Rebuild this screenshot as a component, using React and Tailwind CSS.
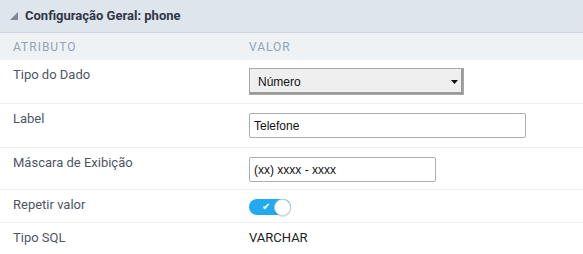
import React from 'react';

const rows = [
  { label: 'Tipo do Dado', h: 'h-[44px]', kind: 'select' },
  { label: 'Label', h: 'h-[44px]', kind: 'label' },
  { label: 'Máscara de Exibição', h: 'h-[42px]', kind: 'mask' },
  { label: 'Repetir valor', h: 'h-[33px]', kind: 'toggle' },
  { label: 'Tipo SQL', h: 'h-[31px]', kind: 'text' },
];

const Value = ({ kind }) => {
  if (kind === 'select') {
    return (
      <div className="mt-[8px] flex h-[27px] w-[215px] items-center justify-between border border-[#a8a8a8] bg-[#efefef] pl-[8px] pr-[4px] shadow-[inset_-2px_-2px_0_#9a9a9a] font-['Liberation_Sans',sans-serif] text-[12px] text-[#111]">
        <span>Número</span>
        <svg width="7" height="4" viewBox="0 0 7 4" className="mr-[1px]">
          <path d="M0 0h7L3.5 4z" fill="#111" />
        </svg>
      </div>
    );
  }
  if (kind === 'label' || kind === 'mask') {
    return (
      <div
        className={`${kind === 'label' ? 'mt-[9px] w-[277px]' : 'mt-[9px] w-[187px]'} flex h-[25px] items-center rounded-[2px] border border-[#a9aeb8] bg-white px-[4px] font-['Liberation_Sans',sans-serif] text-[12px] text-[#111]`}
      >
        {kind === 'label' ? 'Telefone' : '(xx) xxxx - xxxx'}
      </div>
    );
  }
  if (kind === 'toggle') {
    return (
      <div className="mt-[9px] flex h-[16px] w-[42px] items-center rounded-full bg-[#22aaf1]">
        <span className="ml-[13px] text-[10px] leading-none text-white">✔</span>
        <span className="ml-auto h-[17px] w-[17px] rounded-full border border-[#c9d3dc] bg-white shadow-[0_1px_1px_rgba(0,0,0,0.15)]" />
      </div>
    );
  }
  return <div className="pt-[6px] text-[13px] leading-[18px] text-[#222]">VARCHAR</div>;
};

export default function App() {
  return (
    <div className="w-[583px] h-[254px] overflow-hidden bg-white font-['Roboto',sans-serif]">
      <div className="flex h-[33px] items-center border-b border-[#cdd6de] bg-[#dfe5ec] pl-[10px]">
        <svg width="8" height="8" viewBox="0 0 8 8" className="mb-[1px]">
          <path d="M8 0V8H0z" fill="#7f8891" />
        </svg>
        <span className="ml-[7px] text-[13px] font-bold text-[#2f3747]">Configuração Geral: phone</span>
      </div>
      <div className="flex h-[27px] items-center bg-[#eef2f5] text-[12px] tracking-[1px] text-[#8ea4b7]">
        <div className="w-[249px] pl-[13px]">ATRIBUTO</div>
        <div>VALOR</div>
      </div>
      {rows.map((r) => (
        <div key={r.label} className={`flex ${r.h} border-b border-[#edf0f3] last:border-b-0`}>
          <div className="w-[249px] pl-[13px] pt-[6px] text-[13px] leading-[18px] text-[#4f5663]">{r.label}</div>
          <Value kind={r.kind} />
        </div>
      ))}
    </div>
  );
}
